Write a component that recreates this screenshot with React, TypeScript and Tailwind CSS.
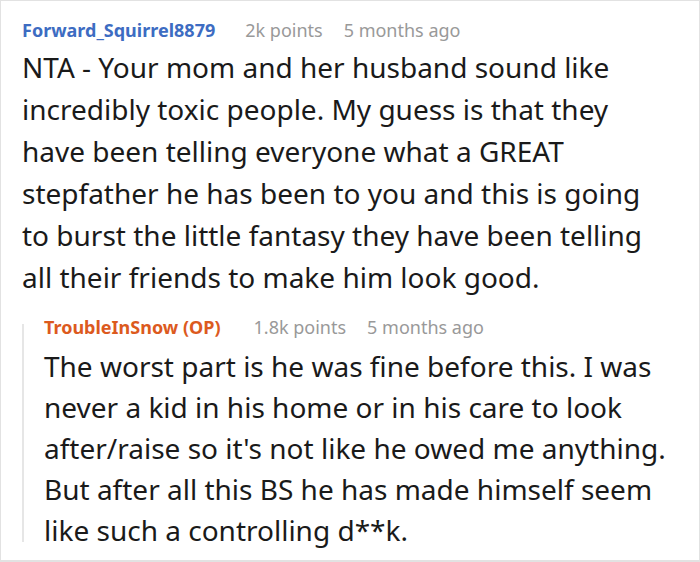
import React from "react";

const mainLines = [
  "NTA - Your mom and her husband sound like",
  "incredibly toxic people. My guess is that they",
  "have been telling everyone what a GREAT",
  "stepfather he has been to you and this is going",
  "to burst the little fantasy they have been telling",
  "all their friends to make him look good.",
];

const replyLines = [
  "The worst part is he was fine before this. I was",
  "never a kid in his home or in his care to look",
  "after/raise so it's not like he owed me anything.",
  "But after all this BS he has made himself seem",
  "like such a controlling d**k.",
];

export default function App() {
  return (
    <div
      className="w-[700px] h-[562px] bg-white border border-[#e2e2e2] border-b-2 overflow-hidden pl-[21px] pt-[17px] text-[#1a1a1a]"
      style={{ fontFamily: '"Noto Sans", "Open Sans", sans-serif' }}
    >
      <div className="flex items-center h-[24px] text-[18px] leading-[24px]">
        <span className="font-bold text-[#3d6cc2]">Forward_Squirrel8879</span>
        <span className="ml-[30px] text-[#999999]">2k points</span>
        <span className="ml-[21px] text-[#999999]">5 months ago</span>
      </div>
      <div className="mt-[4px] text-[28px] leading-[42px]">
        {mainLines.map((l, i) => (
          <div key={i} className="whitespace-nowrap">{l}</div>
        ))}
      </div>
      <div className="mt-[17px] flex">
        <div className="w-[2px] bg-[#e6e6e6] mt-[9px] mb-[9px] shrink-0" />
        <div className="pl-[20px]">
          <div className="flex items-center h-[24px] text-[18px] leading-[24px]">
            <span className="font-bold text-[#dc5a1e]">TroubleInSnow (OP)</span>
            <span className="ml-[33px] text-[#999999]">1.8k points</span>
            <span className="ml-[21px] text-[#999999]">5 months ago</span>
          </div>
          <div className="mt-[7px] text-[28px] leading-[41px]">
            {replyLines.map((l, i) => (
              <div key={i} className="whitespace-nowrap">{l}</div>
            ))}
          </div>
        </div>
      </div>
    </div>
  );
}
